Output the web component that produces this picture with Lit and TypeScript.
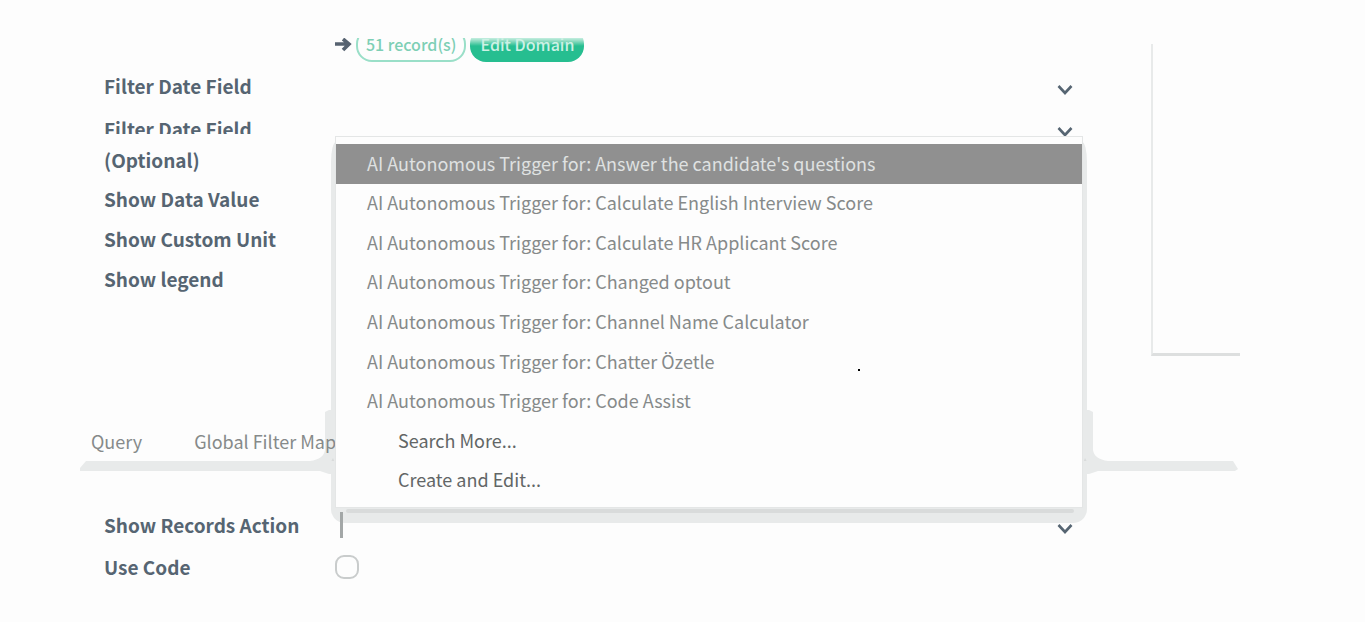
import { LitElement, html, css, svg } from "lit";
import { customElement, state } from "lit/decorators.js";
import { classMap } from "lit/directives/class-map.js";

const TRIGGERS = [
  "Answer the candidate's questions",
  "Calculate English Interview Score",
  "Calculate HR Applicant Score",
  "Changed optout",
  "Channel Name Calculator",
  "Chatter Özetle",
  "Code Assist",
];

const chevron = html`<svg class="chevron" viewBox="0 0 16 12" aria-hidden="true">
  <path d="M1.5 2 L8 9 L14.5 2" fill="none" stroke="currentColor" stroke-width="2.6" />
</svg>`;

const joint = svg`
  <path d="M0 1 H7 L11 3 V41 Q12 50 26 52 V62 H16 L7 65 H1 Z" fill="#e8eaea" />
  <path d="M3 49 L9 60 L6 62 H1 V54 Z" fill="#d9dbdb" />`;

@customElement("app-root")
export class AppRoot extends LitElement {
  @state() private active = 0;

  static styles = css`
    :host {
      display: block;
      isolation: isolate;
      box-sizing: border-box;
      min-height: 100vh;
      padding: 38px 125px 24px 80px;
      background: #fdfdfd;
      color: #566572;
      font-family: "Noto Sans CJK SC", "Noto Sans", sans-serif;
      font-size: 18px;
      overflow: hidden;
    }
    * {
      box-sizing: border-box;
    }
    button, input, select {
      font: inherit;
      color: inherit;
      margin: 0;
      outline: none;
    }
    .top {
      display: flex;
      gap: 68px;
    }
    .form {
      flex: 1;
      min-width: 0;
      padding-left: 24px;
    }
    .lower {
      display: grid;
      gap: 2px;
      margin-right: 157px;
      padding-top: 34px;
    }
    .preview {
      width: 89px;
      height: 312px;
      margin-top: 6px;
      border-left: 2px solid #e8eaea;
      border-bottom: 3px solid #dddfdf;
    }
    .domain {
      display: flex;
      align-items: flex-end;
      gap: 4px;
      height: 24px;
      margin: 0 0 4px 231px;
      overflow: hidden;
    }
    .arrow {
      width: 17px;
      height: 24px;
    }
    .pill {
      flex: none;
      height: 34px;
      padding: 0 8px 2px;
      border: 2px solid #9adfc8;
      border-radius: 16px;
      background: transparent;
      color: #7dcfb5;
      font-size: 16px;
      font-weight: 500;
      line-height: 28px;
      white-space: nowrap;
    }
    .solid {
      padding: 0 10px 2px;
      border: 0;
      background: linear-gradient(#c5eee0 10px, #8fdcc2 13px, #26be90 18px);
      color: #cdf1e5;
    }
    .row {
      display: grid;
      grid-template-columns: 231px 1fr;
      min-height: 40px;
    }
    .row label {
      font-size: 19px;
      font-weight: 700;
      line-height: 40px;
    }
    .double {
      min-height: 73px;
    }
    .row .stacked {
      padding-top: 7px;
      line-height: 31px;
    }
    .line {
      display: block;
    }
    .cut {
      clip-path: inset(0 0 10px 0);
    }
    .field {
      position: relative;
      height: 40px;
    }
    .double .field {
      margin-top: 2px;
    }
    .control {
      width: 100%;
      height: 40px;
      padding: 0 32px 0 8px;
      border: 0;
      background: transparent;
      appearance: none;
    }
    .chevron {
      position: absolute;
      right: 10px;
      top: 18px;
      width: 16px;
      height: 12px;
      pointer-events: none;
    }
    .caret {
      position: absolute;
      left: 5px;
      top: 7px;
      width: 3px;
      height: 26px;
      background: #a3a7a7;
    }
    .check {
      appearance: none;
      width: 24px;
      height: 24px;
      margin-top: 8px;
      border: 2px solid #c9cccc;
      border-radius: 9px;
      background: #fdfdfd;
    }
    .tabs {
      display: flex;
      margin-top: 64px;
      height: 41px;
      padding-left: 11px;
      gap: 52px;
    }
    .tab {
      padding: 0;
      border: 0;
      background: none;
      color: #868a8a;
      white-space: nowrap;
    }
    .rule {
      height: 10px;
      background: #e8eaea;
      clip-path: polygon(6px 0, calc(100% - 5px) 0, 100% 8px, calc(100% - 3px) 100%, 0 100%, 0 7px);
      margin-right: 2px;
    }
    .menu {
      position: absolute;
      left: 0;
      right: 0;
      bottom: calc(100% - 3px);
      padding: 7px 0;
      border: 1px solid #e4e6e6;
      background: #fdfdfd;
    }
    .menu::before {
      content: "";
      position: absolute;
      z-index: -1;
      inset: 5px -5px -16px;
      border-radius: 5px 5px 14px 14px / 20px 20px 14px 14px;
      background: #e8eaea;
    }
    .menu::after {
      content: "";
      position: absolute;
      left: 10px;
      right: 8px;
      bottom: -6px;
      height: 4px;
      border-radius: 2px;
      background: #d9dbdb;
    }
    .options {
      display: grid;
      grid-auto-rows: 1fr;
      min-height: 356px;
      margin: 0;
      padding: 0;
      list-style: none;
    }
    .option {
      display: flex;
      width: 100%;
      height: 100%;
      align-items: center;
      padding: 0 31px 2px;
      border: 0;
      background: transparent;
      color: #868a8a;
      text-align: left;
      white-space: nowrap;
    }
    .active {
      background: #909090;
      color: #dfe1e1;
    }
    .extra {
      padding-left: 62px;
      color: #626666;
    }
    .joint {
      position: absolute;
      z-index: -1;
      top: 272px;
      width: 26px;
      height: 65px;
    }
    .right {
      left: 100%;
    }
    .left {
      right: 100%;
      transform: scaleX(-1);
    }
    .dot {
      position: absolute;
      left: 522px;
      top: 232px;
      width: 2px;
      height: 2px;
      background: #000;
    }
  `;

  private selectRow(id: string, label: string) {
    return html`<div class="row">
      <label for=${id}>${label}</label>
      <div class="field"><select class="control" id=${id}></select>${chevron}</div>
    </div>`;
  }

  render() {
    return html`
      <div class="top">
        <div class="form">
          <div class="domain">
            <svg class="arrow" viewBox="0 0 17 24" aria-hidden="true">
              <path d="M0 6 H14 M8 1 L14 6 L8 12" fill="none" stroke="#566270" stroke-width="3.6" />
            </svg>
            <button class="pill">51 record(s)</button>
            <button class="pill solid">Edit Domain</button>
          </div>
          ${this.selectRow("date", "Filter Date Field")}
          <div class="row double">
            <label class="stacked" for="date2"><span class="line cut">Filter Date Field</span><span class="line">(Optional)</span></label>
            <div class="field"><select class="control" id="date2"></select>${chevron}</div>
          </div>
          <div class="row"><label>Show Data Value</label></div>
          <div class="row"><label>Show Custom Unit</label></div>
          <div class="row"><label>Show legend</label></div>
        </div>
        <div class="preview"></div>
      </div>
      <nav class="tabs">
        <button class="tab">Query</button>
        <button class="tab">Global Filter Map</button>
      </nav>
      <div class="rule"></div>
      <div class="form lower">
        <div class="row">
          <label for="action">Show Records Action</label>
          <div class="field">
            <input class="control" id="action" type="text" autocomplete="off" />
            ${chevron}
            <div class="menu">
              <svg class="joint left" viewBox="0 0 26 65" aria-hidden="true">${joint}</svg>
              <svg class="joint right" viewBox="0 0 26 65" aria-hidden="true">${joint}</svg>
              <ul class="options">
                ${TRIGGERS.map(
                  (name, i) => html`<li>
                    <button
                      class=${classMap({ option: true, active: i === this.active })}
                      @mouseenter=${() => (this.active = i)}
                    >AI Autonomous Trigger for: ${name}</button>
                  </li>`
                )}
                <li><button class="option extra">Search More...</button></li>
                <li><button class="option extra">Create and Edit...</button></li>
              </ul>
              <span class="dot"></span>
            </div>
            <span class="caret"></span>
          </div>
        </div>
        <div class="row">
          <label for="code">Use Code</label>
          <div class="field"><input class="check" id="code" type="checkbox" /></div>
        </div>
      </div>
    `;
  }
}
